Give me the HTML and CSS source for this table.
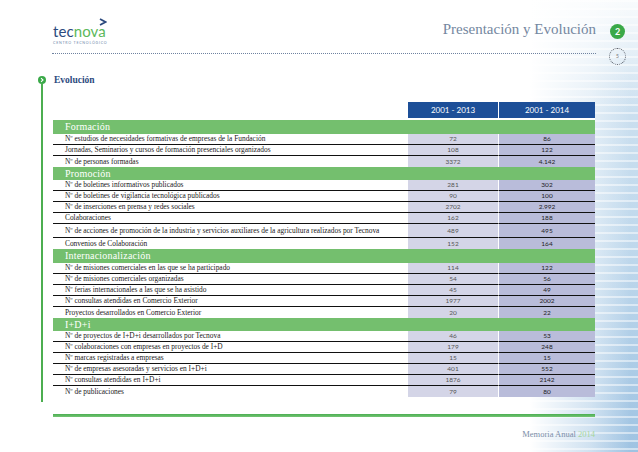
FILE: index.html
```html
<!DOCTYPE html>
<html lang="es">
<head>
<meta charset="utf-8">
<title>Presentación y Evolución</title>
<link rel="stylesheet" href="styles.css">
</head>
<body>
<div class="page">
  <header class="header">
    <div class="header-main">
      <div class="logo">
        <div class="logo-mark">
          <svg width="8" height="8" viewBox="0 0 8 8"><polyline points="1,1 6.5,4 1,7" fill="none" stroke="#2c4a7e" stroke-width="1.8" stroke-linejoin="miter"/></svg>
        </div>
        <div class="logo-word"><span class="tec">tec</span><span class="nova">nova</span></div>
        <div class="logo-tag">CENTRO TECNOLÓGICO</div>
      </div>
      <h1 class="title">Presentación y Evolución</h1>
    </div>
    <div class="header-side">
      <span class="chapter">2</span>
      <span class="pagenum">5</span>
    </div>
  </header>

  <section class="content">
    <div class="rail">
      <span class="bullet"><svg width="8" height="8" viewBox="0 0 8 8"><polyline points="3,2.2 5,4 3,5.8" fill="none" stroke="#fff" stroke-width="1.1"/></svg></span>
      <span class="rail-line"></span>
    </div>
    <div class="main">
      <h2 class="heading">Evolución</h2>
      <table class="stats">
        <colgroup><col class="c-label"><col class="c-a"><col class="c-b"></colgroup>
        <thead>
          <tr><th class="blank"></th><th class="year year-a">2001 - 2013</th><th class="year">2001 - 2014</th></tr>
        </thead>
        <tbody>
          <tr class="group"><td colspan="3">Formación</td></tr>
          <tr><td class="label">Nº estudios de necesidades formativas de empresas de la Fundación</td><td class="a">72</td><td class="b">86</td></tr>
          <tr><td class="label">Jornadas, Seminarios y cursos de formación presenciales organizados</td><td class="a">108</td><td class="b">122</td></tr>
          <tr class="last"><td class="label">Nº de personas formadas</td><td class="a">3372</td><td class="b">4.142</td></tr>

          <tr class="group"><td colspan="3">Promoción</td></tr>
          <tr><td class="label">Nº de boletines informativos publicados</td><td class="a">281</td><td class="b">302</td></tr>
          <tr><td class="label">Nº de boletines de vigilancia tecnológica publicados</td><td class="a">90</td><td class="b">100</td></tr>
          <tr><td class="label">Nº de inserciones en prensa y redes sociales</td><td class="a">2702</td><td class="b">2.992</td></tr>
          <tr><td class="label">Colaboraciones</td><td class="a">162</td><td class="b">188</td></tr>
          <tr class="tall"><td class="label">Nº de acciones de promoción de la industria y servicios auxiliares de la agricultura realizados por Tecnova</td><td class="a">489</td><td class="b">495</td></tr>
          <tr class="last"><td class="label">Convenios de Colaboración</td><td class="a">152</td><td class="b">164</td></tr>

          <tr class="group"><td colspan="3">Internacionalización</td></tr>
          <tr><td class="label">Nº de misiones comerciales en las que se ha participado</td><td class="a">114</td><td class="b">122</td></tr>
          <tr><td class="label">Nº de misiones comerciales organizadas</td><td class="a">54</td><td class="b">56</td></tr>
          <tr><td class="label">Nº ferias internacionales a las que se ha asistido</td><td class="a">45</td><td class="b">49</td></tr>
          <tr><td class="label">Nº consultas atendidas en Comercio Exterior</td><td class="a">1977</td><td class="b">2002</td></tr>
          <tr class="last"><td class="label">Proyectos desarrollados en Comercio Exterior</td><td class="a">20</td><td class="b">22</td></tr>

          <tr class="group"><td colspan="3">I+D+i</td></tr>
          <tr><td class="label">Nº de proyectos de I+D+i desarrollados por Tecnova</td><td class="a">46</td><td class="b">53</td></tr>
          <tr><td class="label">Nº colaboraciones con empresas en proyectos de I+D</td><td class="a">179</td><td class="b">248</td></tr>
          <tr><td class="label">Nº marcas registradas a empresas</td><td class="a">15</td><td class="b">15</td></tr>
          <tr><td class="label">Nº de empresas asesoradas y servicios en I+D+i</td><td class="a">401</td><td class="b">552</td></tr>
          <tr><td class="label">Nº consultas atendidas en I+D+i</td><td class="a">1876</td><td class="b">2142</td></tr>
          <tr class="last"><td class="label">Nº de publicaciones</td><td class="a">79</td><td class="b">80</td></tr>
        </tbody>
      </table>
    </div>
  </section>

  <div class="bottom-bar"></div>
  <footer class="footer">Memoria Anual <span class="year-foot">2014</span></footer>
</div>
</body>
</html>
```

FILE: styles.css
```css
html, body {
  margin: 0;
  padding: 0;
}

body {
  width: 638px;
  height: 452px;
  overflow: hidden;
  font-family: "Liberation Serif", serif;
  background:
    linear-gradient(to right, #ffffff 0, #ffffff 530px, rgba(255,255,255,0.5) 590px, rgba(255,255,255,0) 630px),
    linear-gradient(to bottom, rgba(255,255,255,0.85) 0, rgba(255,255,255,0) 110px),
    repeating-linear-gradient(to bottom, rgba(255,255,255,0.5) 0 2px, rgba(255,255,255,0) 2px 8px),
    linear-gradient(to bottom, #d4e5f2 0, #bfd8ec 55%, #9fc3e2 100%);
}

.page {
  width: 638px;
  height: 452px;
}

/* Header */
.header {
  display: flex;
  height: 54px;
  padding: 0 12px 0 52px;
  align-items: flex-start;
}

.header-main {
  flex: 1;
  height: 53px;
  border-bottom: 1px dotted #6f82a0;
  display: flex;
  justify-content: space-between;
  align-items: flex-start;
}

.logo {
  padding-top: 18px;
  padding-left: 1px;
  width: 56px;
}

.logo-mark {
  display: flex;
  justify-content: flex-end;
  height: 7px;
  padding-right: 2px;
}

.logo-mark svg {
  display: block;
}

.logo-word {
  font-family: Lato, "Open Sans", sans-serif;
  font-size: 15px;
  line-height: 13px;
  letter-spacing: 0.1px;
}

.tec {
  color: #2c4a7e;
}

.nova {
  color: #5cb85b;
}

.logo-tag {
  margin-top: 2px;
  font-family: Lato, sans-serif;
  font-size: 3.6px;
  line-height: 5px;
  letter-spacing: 0.75px;
  color: #7089aa;
  white-space: nowrap;
}

.title {
  margin: 20px 0 0;
  font-family: "Liberation Serif", serif;
  font-weight: normal;
  font-size: 15px;
  line-height: 18px;
  color: #7487a0;
  white-space: nowrap;
}

.header-side {
  width: 17px;
  margin-left: 13px;
  padding-top: 24px;
  display: flex;
  flex-direction: column;
  align-items: center;
  gap: 9px;
}

.chapter {
  width: 15px;
  height: 15px;
  border-radius: 50%;
  background: #3aa948;
  color: #fff;
  font-family: Lato, sans-serif;
  font-weight: 700;
  font-size: 9px;
  line-height: 15px;
  text-align: center;
}

.pagenum {
  box-sizing: border-box;
  width: 17px;
  height: 17px;
  border-radius: 50%;
  border: 1px dotted #555b66;
  color: #777;
  font-family: Lato, sans-serif;
  font-size: 5px;
  line-height: 15px;
  text-align: center;
}

/* Content */
.content {
  display: flex;
  margin-top: 22px;
  padding-left: 38px;
}

.rail {
  width: 8px;
  display: flex;
  flex-direction: column;
  align-items: center;
}

.bullet {
  width: 8px;
  height: 8px;
  border-radius: 50%;
  background: #3aa948;
  flex: none;
}

.bullet svg {
  display: block;
}

.rail-line {
  flex: 1;
  width: 1.5px;
  background: #4cae50;
}

.main {
  margin-left: 7px;
  padding-bottom: 5px;
}

.heading {
  margin: 0 0 18px;
  padding-left: 1px;
  font-family: "Liberation Serif", serif;
  font-weight: bold;
  font-size: 9.5px;
  line-height: 8px;
  color: #2c4a7e;
}

/* Table */
.stats {
  width: 542px;
  border-collapse: separate;
  border-spacing: 0;
  table-layout: fixed;
}

.c-label { width: 355px; }
.c-a { width: 91px; }
.c-b { width: 96px; }

.stats th,
.stats td {
  padding: 0;
  white-space: nowrap;
  overflow: hidden;
}

.stats th {
  line-height: 16px;
  border-bottom: 2px solid #fff;
  font-family: Lato, sans-serif;
  font-weight: normal;
  font-size: 8px;
  color: #fff;
  text-align: center;
}

.stats th.year {
  background: #1d4f98;
}

.stats th.year-a {
  border-right: 1px solid #fff;
}

.stats tr.group td {
  background: #74bf6e;
  color: #fff;
  font-family: "Liberation Serif", serif;
  font-size: 10px;
  line-height: 13.5px;
  padding-left: 12px;
  letter-spacing: 0.2px;
}

.stats td.label,
.stats td.a,
.stats td.b {
  line-height: 10px;
  border-bottom: 1px solid #111;
}

.stats td.label {
  background: #fff;
  padding-left: 12px;
  font-family: "Liberation Serif", serif;
  font-size: 7.4px;
  color: #1a1a1a;
}

.stats td.a,
.stats td.b {
  text-align: center;
  font-family: Lato, sans-serif;
  font-size: 6.5px;
}

.stats td.a {
  background: #d4d5e7;
  color: #555;
  border-right: 1px solid #fff;
}

.stats td.b {
  background: #b9bcda;
  color: #1e1e1e;
}

.stats tr.tall td {
  line-height: 13px;
}

.stats tr.last td {
  border-bottom: 0;
  line-height: 11px;
}

/* Bottom */
.bottom-bar {
  margin: 12px 0 0 53px;
  width: 542px;
  height: 3px;
  background: linear-gradient(to bottom, #4bae52, #74c474);
}

.footer {
  width: 595px;
  margin-top: 12px;
  text-align: right;
  font-family: "Liberation Serif", serif;
  font-size: 8.5px;
  line-height: 10px;
  color: #7a8ea8;
}

.year-foot {
  color: #a4d59e;
}
```
